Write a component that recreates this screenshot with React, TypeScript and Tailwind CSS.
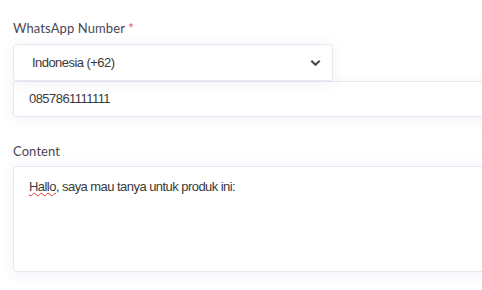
import React from 'react';

const boxCls =
  'bg-white border border-[#e8e8f0] rounded-[3px] shadow-[0_2px_14px_rgba(110,100,200,0.09)]';

const fieldText = "text-[13px] tracking-[-0.55px] text-[#3a3a3a] font-['Liberation_Sans',Arial,sans-serif]";

export default function App() {
  return (
    <div className="w-[482px] h-[290px] bg-white overflow-hidden pl-[13px] pt-[18px] font-['Liberation_Sans',Arial,sans-serif]">
      <label className="block text-[13px] leading-[20px] text-[#4a4754] font-['Lato','Open_Sans',sans-serif] tracking-[0.1px]">
        WhatsApp Number <span className="text-[#f0506e]">*</span>
      </label>
      <div className="mt-[6px] w-[320px] h-[37px] flex items-center justify-between pl-[18px] pr-[11px] relative z-10 bg-white border border-[#e8e8f0] rounded-[3px] shadow-[0_2px_14px_rgba(110,100,200,0.09)]">
        <span className={fieldText}>Indonesia (+62)</span>
        <svg width="11" height="8" viewBox="0 0 11 8" fill="none">
          <path d="M1.3 1.8 L5.5 5.8 L9.7 1.8" stroke="#4a4a55" strokeWidth="2.2" />
        </svg>
      </div>
      <div className={`w-[520px] h-[36px] flex items-center pl-[15px] ${boxCls}`}>
        <span className={fieldText}>0857861111111</span>
      </div>
      <label className="block mt-[24px] text-[13px] leading-[20px] text-[#4a4754] font-['Lato','Open_Sans',sans-serif] tracking-[0.1px]">
        Content
      </label>
      <div className={`mt-[5px] w-[520px] h-[106px] pl-[15px] pt-[7px] ${boxCls}`}>
        <span className={fieldText}>
          <span className="underline decoration-wavy decoration-[#e03030] decoration-[1px]">Hallo</span>, saya mau tanya untuk produk ini:
        </span>
      </div>
    </div>
  );
}
